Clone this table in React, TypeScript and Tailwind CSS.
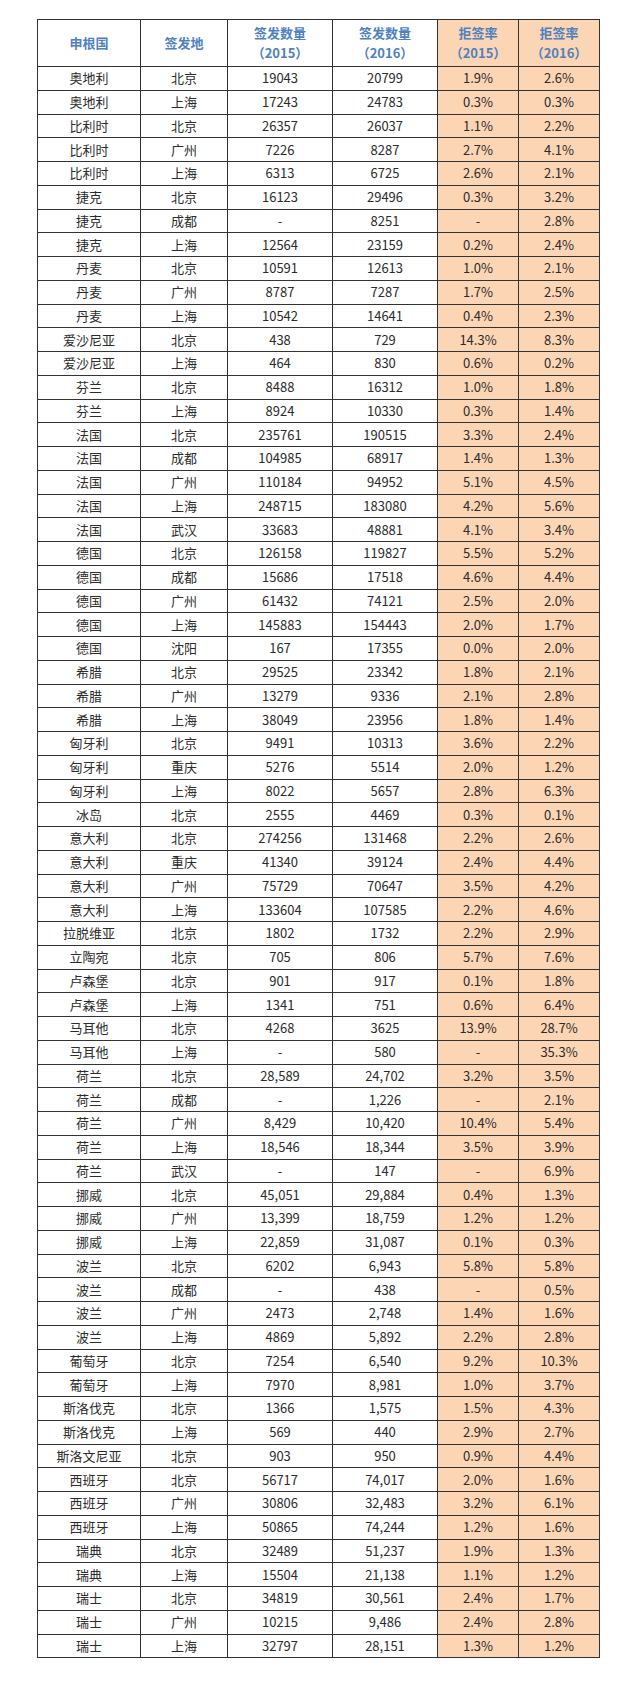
const rows: [string, string, string, string, string, string][] = [
  ['奥地利', '北京', '19043', '20799', '1.9%', '2.6%'],
  ['奥地利', '上海', '17243', '24783', '0.3%', '0.3%'],
  ['比利时', '北京', '26357', '26037', '1.1%', '2.2%'],
  ['比利时', '广州', '7226', '8287', '2.7%', '4.1%'],
  ['比利时', '上海', '6313', '6725', '2.6%', '2.1%'],
  ['捷克', '北京', '16123', '29496', '0.3%', '3.2%'],
  ['捷克', '成都', '-', '8251', '-', '2.8%'],
  ['捷克', '上海', '12564', '23159', '0.2%', '2.4%'],
  ['丹麦', '北京', '10591', '12613', '1.0%', '2.1%'],
  ['丹麦', '广州', '8787', '7287', '1.7%', '2.5%'],
  ['丹麦', '上海', '10542', '14641', '0.4%', '2.3%'],
  ['爱沙尼亚', '北京', '438', '729', '14.3%', '8.3%'],
  ['爱沙尼亚', '上海', '464', '830', '0.6%', '0.2%'],
  ['芬兰', '北京', '8488', '16312', '1.0%', '1.8%'],
  ['芬兰', '上海', '8924', '10330', '0.3%', '1.4%'],
  ['法国', '北京', '235761', '190515', '3.3%', '2.4%'],
  ['法国', '成都', '104985', '68917', '1.4%', '1.3%'],
  ['法国', '广州', '110184', '94952', '5.1%', '4.5%'],
  ['法国', '上海', '248715', '183080', '4.2%', '5.6%'],
  ['法国', '武汉', '33683', '48881', '4.1%', '3.4%'],
  ['德国', '北京', '126158', '119827', '5.5%', '5.2%'],
  ['德国', '成都', '15686', '17518', '4.6%', '4.4%'],
  ['德国', '广州', '61432', '74121', '2.5%', '2.0%'],
  ['德国', '上海', '145883', '154443', '2.0%', '1.7%'],
  ['德国', '沈阳', '167', '17355', '0.0%', '2.0%'],
  ['希腊', '北京', '29525', '23342', '1.8%', '2.1%'],
  ['希腊', '广州', '13279', '9336', '2.1%', '2.8%'],
  ['希腊', '上海', '38049', '23956', '1.8%', '1.4%'],
  ['匈牙利', '北京', '9491', '10313', '3.6%', '2.2%'],
  ['匈牙利', '重庆', '5276', '5514', '2.0%', '1.2%'],
  ['匈牙利', '上海', '8022', '5657', '2.8%', '6.3%'],
  ['冰岛', '北京', '2555', '4469', '0.3%', '0.1%'],
  ['意大利', '北京', '274256', '131468', '2.2%', '2.6%'],
  ['意大利', '重庆', '41340', '39124', '2.4%', '4.4%'],
  ['意大利', '广州', '75729', '70647', '3.5%', '4.2%'],
  ['意大利', '上海', '133604', '107585', '2.2%', '4.6%'],
  ['拉脱维亚', '北京', '1802', '1732', '2.2%', '2.9%'],
  ['立陶宛', '北京', '705', '806', '5.7%', '7.6%'],
  ['卢森堡', '北京', '901', '917', '0.1%', '1.8%'],
  ['卢森堡', '上海', '1341', '751', '0.6%', '6.4%'],
  ['马耳他', '北京', '4268', '3625', '13.9%', '28.7%'],
  ['马耳他', '上海', '-', '580', '-', '35.3%'],
  ['荷兰', '北京', '28,589', '24,702', '3.2%', '3.5%'],
  ['荷兰', '成都', '-', '1,226', '-', '2.1%'],
  ['荷兰', '广州', '8,429', '10,420', '10.4%', '5.4%'],
  ['荷兰', '上海', '18,546', '18,344', '3.5%', '3.9%'],
  ['荷兰', '武汉', '-', '147', '-', '6.9%'],
  ['挪威', '北京', '45,051', '29,884', '0.4%', '1.3%'],
  ['挪威', '广州', '13,399', '18,759', '1.2%', '1.2%'],
  ['挪威', '上海', '22,859', '31,087', '0.1%', '0.3%'],
  ['波兰', '北京', '6202', '6,943', '5.8%', '5.8%'],
  ['波兰', '成都', '-', '438', '-', '0.5%'],
  ['波兰', '广州', '2473', '2,748', '1.4%', '1.6%'],
  ['波兰', '上海', '4869', '5,892', '2.2%', '2.8%'],
  ['葡萄牙', '北京', '7254', '6,540', '9.2%', '10.3%'],
  ['葡萄牙', '上海', '7970', '8,981', '1.0%', '3.7%'],
  ['斯洛伐克', '北京', '1366', '1,575', '1.5%', '4.3%'],
  ['斯洛伐克', '上海', '569', '440', '2.9%', '2.7%'],
  ['斯洛文尼亚', '北京', '903', '950', '0.9%', '4.4%'],
  ['西班牙', '北京', '56717', '74,017', '2.0%', '1.6%'],
  ['西班牙', '广州', '30806', '32,483', '3.2%', '6.1%'],
  ['西班牙', '上海', '50865', '74,244', '1.2%', '1.6%'],
  ['瑞典', '北京', '32489', '51,237', '1.9%', '1.3%'],
  ['瑞典', '上海', '15504', '21,138', '1.1%', '1.2%'],
  ['瑞士', '北京', '34819', '30,561', '2.4%', '1.7%'],
  ['瑞士', '广州', '10215', '9,486', '2.4%', '2.8%'],
  ['瑞士', '上海', '32797', '28,151', '1.3%', '1.2%'],
];

const cell = 'border border-[#333] p-0 text-center align-middle';
const orange = 'bg-[#fcd5b5]';

export default function App() {
  return (
    <div className="min-h-[1697px] bg-white pl-[37px] pt-[19px] font-['Noto_Sans_CJK_SC','Noto_Sans',sans-serif] text-[13px] text-[#2b2b2b]">
      <table className="w-[562px] table-fixed border-collapse">
        <colgroup>
          <col className="w-[103px]" />
          <col className="w-[87px]" />
          <col className="w-[105px]" />
          <col className="w-[105px]" />
          <col className="w-[81px]" />
          <col className="w-[81px]" />
        </colgroup>
        <thead>
          <tr className="h-[47px] font-bold leading-[20px] text-[#4f81bd]">
            <th className={cell}>申根国</th>
            <th className={cell}>签发地</th>
            <th className={cell}>
              签发数量
              <br />（2015）
            </th>
            <th className={cell}>
              签发数量
              <br />（2016）
            </th>
            <th className={`${cell} ${orange}`}>
              拒签率
              <br />（2015）
            </th>
            <th className={`${cell} ${orange}`}>
              拒签率
              <br />（2016）
            </th>
          </tr>
        </thead>
        <tbody>
          {rows.map((r, i) => (
            <tr key={i} className="h-[23.76px] leading-[18px]">
              <td className={cell}>{r[0]}</td>
              <td className={cell}>{r[1]}</td>
              <td className={cell}>{r[2]}</td>
              <td className={cell}>{r[3]}</td>
              <td className={`${cell} ${orange}`}>{r[4]}</td>
              <td className={`${cell} ${orange}`}>{r[5]}</td>
            </tr>
          ))}
        </tbody>
      </table>
    </div>
  );
}
